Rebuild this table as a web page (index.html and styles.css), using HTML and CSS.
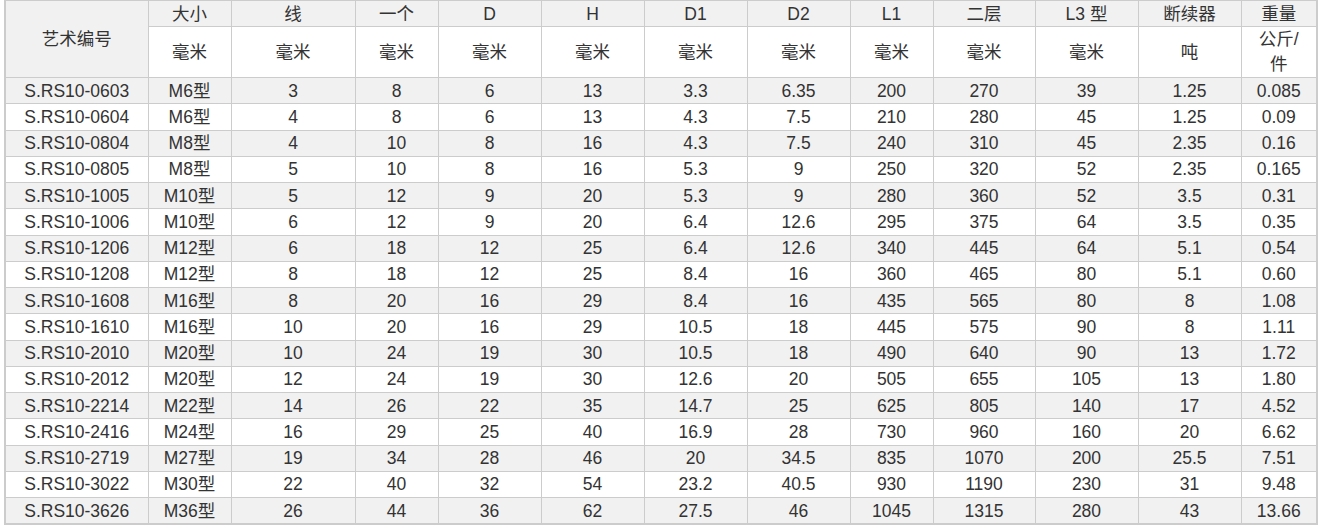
FILE: index.html
```html
<!DOCTYPE html>
<html lang="zh">
<head>
<meta charset="utf-8">
<title>规格表</title>
<link rel="stylesheet" href="styles.css">
</head>
<body>
<table class="spec">
  <colgroup>
    <col class="c-code"><col class="c-size"><col class="c-wide"><col class="c-size">
    <col class="c-mid"><col class="c-mid"><col class="c-mid"><col class="c-mid">
    <col class="c-size"><col class="c-mid2"><col class="c-mid"><col class="c-mid"><col class="c-last">
  </colgroup>
  <thead>
    <tr class="h1">
      <th rowspan="2" class="grey">艺术编号</th>
      <th class="grey">大小</th><th class="grey">线</th><th class="grey">一个</th><th class="grey">D</th><th class="grey">H</th><th class="grey">D1</th><th class="grey">D2</th><th class="grey">L1</th><th class="grey">二层</th><th class="grey">L3 型</th><th class="grey">断续器</th><th class="grey">重量</th>
    </tr>
    <tr class="h2">
      <th>毫米</th><th>毫米</th><th>毫米</th><th>毫米</th><th>毫米</th><th>毫米</th><th>毫米</th><th>毫米</th><th>毫米</th><th>毫米</th><th>吨</th><th class="wrap">公斤/件</th>
    </tr>
  </thead>
  <tbody>
    <tr><td>S.RS10-0603</td><td>M6型</td><td>3</td><td>8</td><td>6</td><td>13</td><td>3.3</td><td>6.35</td><td>200</td><td>270</td><td>39</td><td>1.25</td><td>0.085</td></tr>
    <tr><td>S.RS10-0604</td><td>M6型</td><td>4</td><td>8</td><td>6</td><td>13</td><td>4.3</td><td>7.5</td><td>210</td><td>280</td><td>45</td><td>1.25</td><td>0.09</td></tr>
    <tr><td>S.RS10-0804</td><td>M8型</td><td>4</td><td>10</td><td>8</td><td>16</td><td>4.3</td><td>7.5</td><td>240</td><td>310</td><td>45</td><td>2.35</td><td>0.16</td></tr>
    <tr><td>S.RS10-0805</td><td>M8型</td><td>5</td><td>10</td><td>8</td><td>16</td><td>5.3</td><td>9</td><td>250</td><td>320</td><td>52</td><td>2.35</td><td>0.165</td></tr>
    <tr><td>S.RS10-1005</td><td>M10型</td><td>5</td><td>12</td><td>9</td><td>20</td><td>5.3</td><td>9</td><td>280</td><td>360</td><td>52</td><td>3.5</td><td>0.31</td></tr>
    <tr><td>S.RS10-1006</td><td>M10型</td><td>6</td><td>12</td><td>9</td><td>20</td><td>6.4</td><td>12.6</td><td>295</td><td>375</td><td>64</td><td>3.5</td><td>0.35</td></tr>
    <tr><td>S.RS10-1206</td><td>M12型</td><td>6</td><td>18</td><td>12</td><td>25</td><td>6.4</td><td>12.6</td><td>340</td><td>445</td><td>64</td><td>5.1</td><td>0.54</td></tr>
    <tr><td>S.RS10-1208</td><td>M12型</td><td>8</td><td>18</td><td>12</td><td>25</td><td>8.4</td><td>16</td><td>360</td><td>465</td><td>80</td><td>5.1</td><td>0.60</td></tr>
    <tr><td>S.RS10-1608</td><td>M16型</td><td>8</td><td>20</td><td>16</td><td>29</td><td>8.4</td><td>16</td><td>435</td><td>565</td><td>80</td><td>8</td><td>1.08</td></tr>
    <tr><td>S.RS10-1610</td><td>M16型</td><td>10</td><td>20</td><td>16</td><td>29</td><td>10.5</td><td>18</td><td>445</td><td>575</td><td>90</td><td>8</td><td>1.11</td></tr>
    <tr><td>S.RS10-2010</td><td>M20型</td><td>10</td><td>24</td><td>19</td><td>30</td><td>10.5</td><td>18</td><td>490</td><td>640</td><td>90</td><td>13</td><td>1.72</td></tr>
    <tr><td>S.RS10-2012</td><td>M20型</td><td>12</td><td>24</td><td>19</td><td>30</td><td>12.6</td><td>20</td><td>505</td><td>655</td><td>105</td><td>13</td><td>1.80</td></tr>
    <tr><td>S.RS10-2214</td><td>M22型</td><td>14</td><td>26</td><td>22</td><td>35</td><td>14.7</td><td>25</td><td>625</td><td>805</td><td>140</td><td>17</td><td>4.52</td></tr>
    <tr><td>S.RS10-2416</td><td>M24型</td><td>16</td><td>29</td><td>25</td><td>40</td><td>16.9</td><td>28</td><td>730</td><td>960</td><td>160</td><td>20</td><td>6.62</td></tr>
    <tr><td>S.RS10-2719</td><td>M27型</td><td>19</td><td>34</td><td>28</td><td>46</td><td>20</td><td>34.5</td><td>835</td><td>1070</td><td>200</td><td>25.5</td><td>7.51</td></tr>
    <tr><td>S.RS10-3022</td><td>M30型</td><td>22</td><td>40</td><td>32</td><td>54</td><td>23.2</td><td>40.5</td><td>930</td><td>1190</td><td>230</td><td>31</td><td>9.48</td></tr>
    <tr><td>S.RS10-3626</td><td>M36型</td><td>26</td><td>44</td><td>36</td><td>62</td><td>27.5</td><td>46</td><td>1045</td><td>1315</td><td>280</td><td>43</td><td>13.66</td></tr>
  </tbody>
</table>
</body>
</html>
```
FILE: styles.css
```css
html, body {
  margin: 0;
  padding: 0;
  background: #ffffff;
}

body {
  padding-left: 4px;
  font-family: "Liberation Sans", Arial, "Noto Sans CJK SC", sans-serif;
  font-size: 17.5px;
  color: #333333;
}

.spec {
  border-collapse: collapse;
  table-layout: fixed;
  width: 1312px;
  border: 2px solid #cccccc;
  border-top-width: 1px;
}

.c-code { width: 143px; }
.c-size { width: 83px; }
.c-wide { width: 124px; }
.c-mid { width: 103px; }
.c-mid2 { width: 102px; }
.c-last { width: 76px; }

.spec th,
.spec td {
  border: 1px solid #cccccc;
  padding: 0 11px;
  text-align: center;
  vertical-align: middle;
  font-weight: normal;
  line-height: 24px;
  white-space: nowrap;
  overflow: hidden;
}

.spec th.wrap {
  white-space: normal;
  word-break: break-all;
  line-height: 25px;
}

.spec .grey {
  background: #f1f1f1;
}

.spec .h1 th {
  height: 25px;
}

.spec .h2 th {
  height: 50px;
  background: #ffffff;
}

.spec tbody td {
  height: 25.25px;
}

.spec tbody tr:nth-child(odd) td {
  background: #f1f1f1;
}

.spec tbody tr:nth-child(even) td {
  background: #ffffff;
}
```
